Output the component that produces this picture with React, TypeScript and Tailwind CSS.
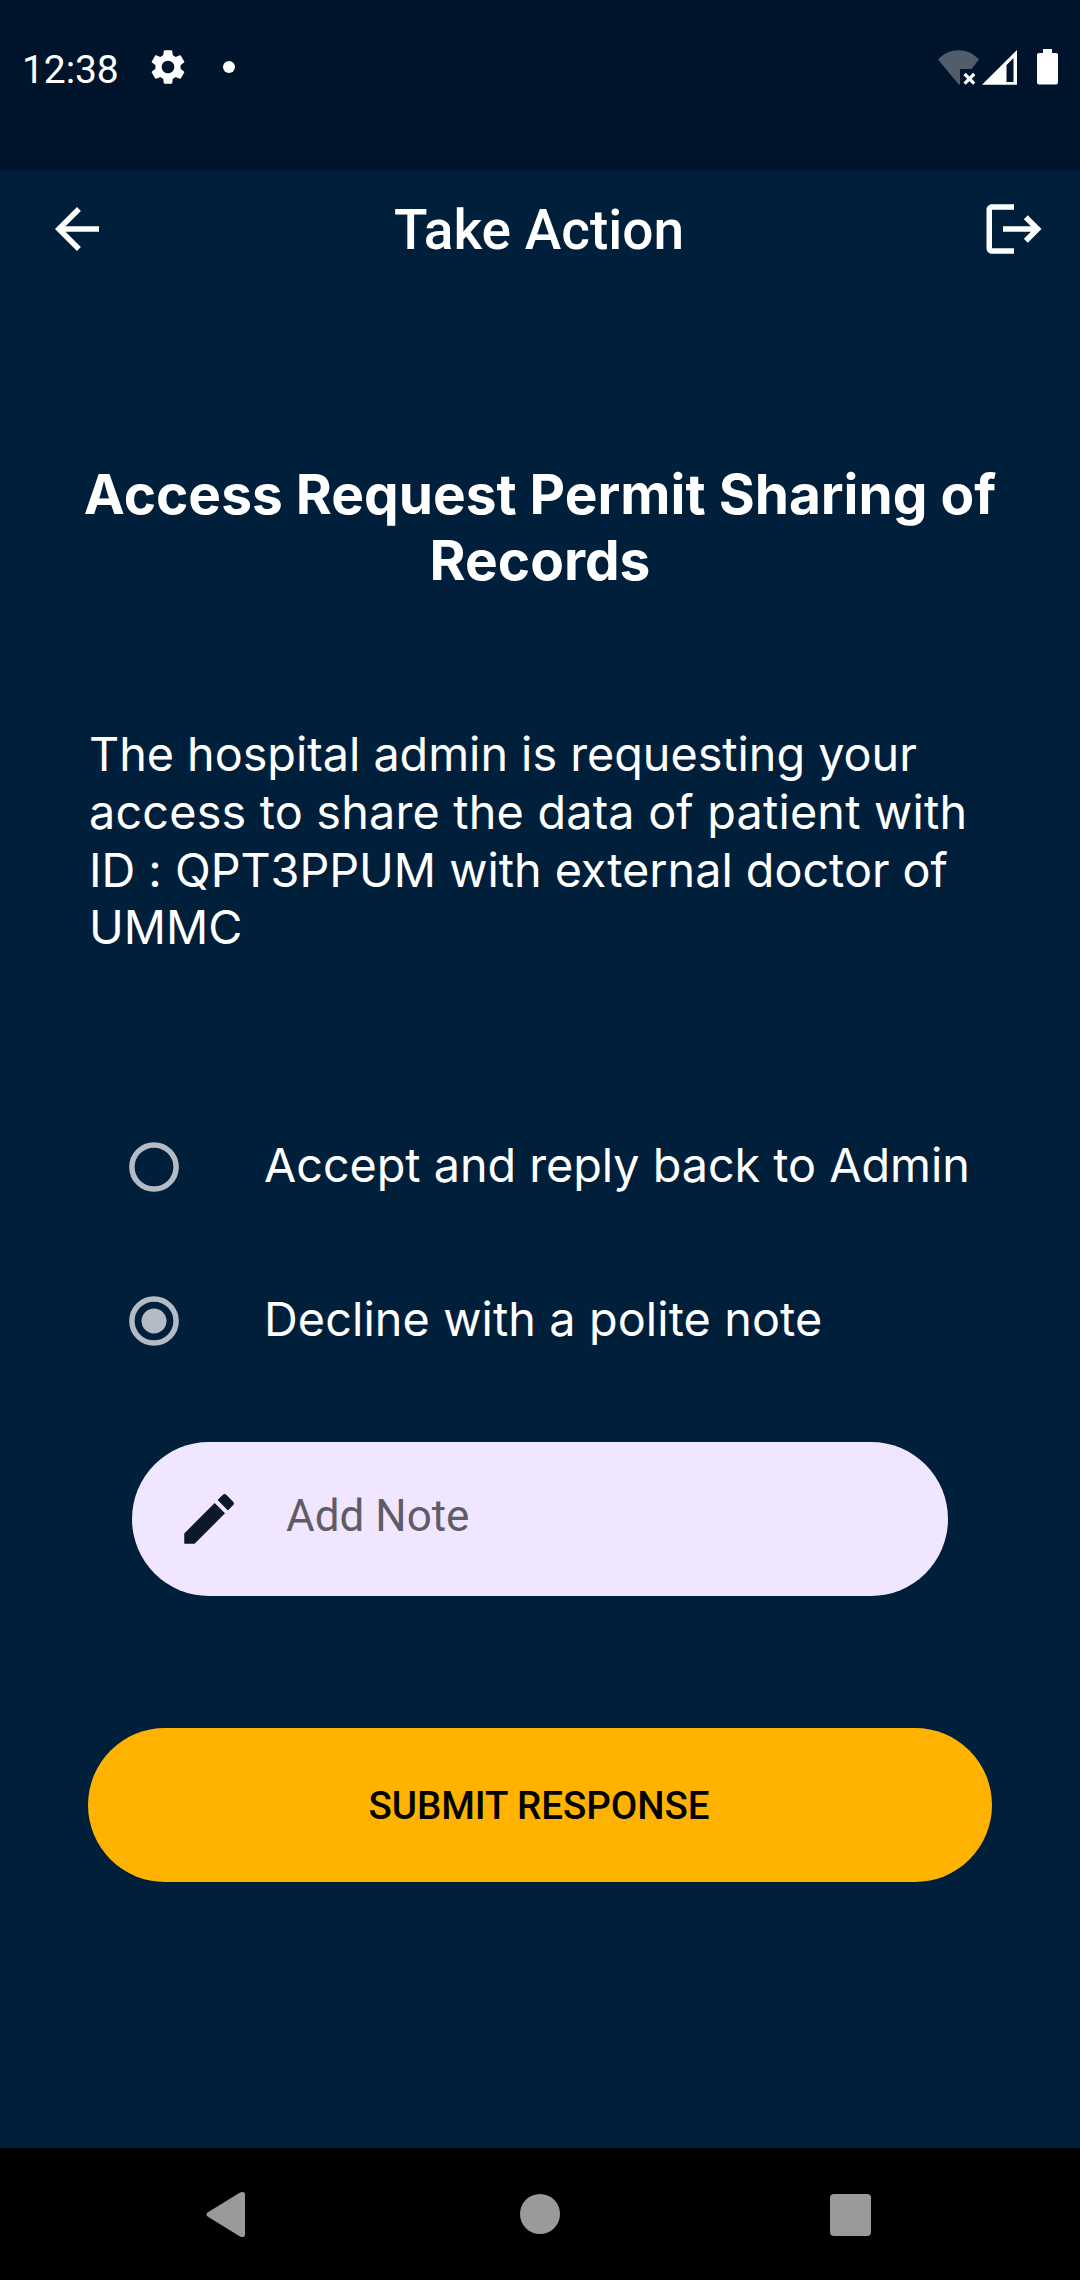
import { useState } from "react";
import { MdArrowBack, MdEdit, MdLogout, MdSettings } from "react-icons/md";

function StatusBar() {
  return (
    <div className="flex h-[171px] items-start justify-between bg-[#00142b] pt-[49px] pr-[22px] pl-[22px] text-white">
      <div className="flex h-9 items-center">
        <span className="mt-[6px] text-[39px] leading-none tracking-[-0.1px]">12:38</span>
        <MdSettings className="ml-[28px] size-[42px]" />
        <span className="ml-[34px] size-3 rounded-full bg-white" />
      </div>
      <div className="flex h-9 items-start">
        <svg className="h-9 w-[42px]" viewBox="0 0 42 36">
          <path d="M0 10.5C11.5 -1.8 29.5 -1.8 41 10.5L33.5 20H22V35.5H20.8Z" fill="#515d6c" />
          <path d="M26.6 25l9.6 9.6M36.2 25l-9.6 9.6" stroke="white" strokeWidth="3.2" />
        </svg>
        <svg className="ml-[2px] h-9 w-[36px]" viewBox="0 0 36 36">
          <path d="M0 35.8L35 1V35.8ZM24.5 16V33H31.5V9Z" fill="white" fillRule="evenodd" />
        </svg>
        <svg className="ml-[19px] h-9 w-[21px]" viewBox="0 0 21 36">
          <path
            d="M6 0H15V4H19Q21 4 21 6V33.5Q21 35.5 19 35.5H2Q0 35.5 0 33.5V6Q0 4 2 4H6Z"
            fill="white"
          />
        </svg>
      </div>
    </div>
  );
}

function AppBar() {
  return (
    <header className="flex h-[116px] items-center justify-between pr-[33px] pl-[44px] text-white">
      <button aria-label="Back">
        <MdArrowBack className="size-[66px]" />
      </button>
      <h1 className="mt-[2px] mr-[13px] text-[55px] leading-none font-medium">Take Action</h1>
      <button aria-label="Log out">
        <MdLogout className="size-[66px]" />
      </button>
    </header>
  );
}

type OptionProps = {
  label: string;
  tracking: string;
  checked: boolean;
  onSelect: () => void;
};

function Option({ label, tracking, checked, onSelect }: OptionProps) {
  return (
    <button
      role="radio"
      aria-checked={checked}
      onClick={onSelect}
      className="flex h-[154px] items-center pl-[129px] text-left"
    >
      <svg className="size-[50px]" viewBox="0 0 50 50" fill="none">
        <circle cx="25" cy="25" r="22.1" stroke="#b3bcc5" strokeWidth="5.5" />
        {checked && <circle cx="25" cy="25" r="12.5" fill="#b3bcc5" />}
      </svg>
      <span
        className={`-mt-[2px] ml-[85px] font-['Inter',sans-serif] text-[46.75px] leading-[57.75px] text-white ${tracking}`}
      >
        {label}
      </span>
    </button>
  );
}

function NavBar() {
  return (
    <nav className="flex h-[132px] items-start bg-black pt-[43px] pl-[206px]">
      <svg className="h-[48px] w-[39px]" viewBox="0 0 39 48">
        <path
          d="M2 21.2L34 1.6Q39 -0.6 39 4V43Q39 47.6 34 45.4L2 25.8Q-1.2 23.5 2 21.2Z"
          fill="#9a9a9a"
        />
      </svg>
      <span className="mt-[3px] ml-[275px] size-[40px] rounded-full bg-[#9a9a9a]" />
      <span className="mt-[3px] ml-[270px] h-[42px] w-[41px] rounded-[4px] bg-[#9a9a9a]" />
    </nav>
  );
}

export default function App() {
  const [choice, setChoice] = useState(1);
  return (
    <div className="flex h-[2280px] w-[1080px] flex-col bg-[#001f3b] font-['Roboto',sans-serif]">
      <StatusBar />
      <AppBar />
      <main className="flex flex-1 flex-col">
        <h2 className="mt-[174px] px-[66px] text-center font-['Inter',sans-serif] text-[55px] leading-[66px] font-bold text-white">
          Access Request Permit Sharing of Records
        </h2>
        <p className="mt-[133px] pr-[80px] pl-[89px] font-['Inter',sans-serif] text-[46.75px] leading-[57.75px] tracking-[-0.03px] text-white">
          The hospital admin is requesting your{" "}
          <span className="tracking-[0.19px]">access to share the data of patient with</span> ID :
          QPT3PPUM with external doctor of UMMC
        </p>
        <div role="radiogroup" className="mt-[133px] flex flex-col">
          <Option
            label="Accept and reply back to Admin"
            tracking="tracking-[-0.04px]"
            checked={choice === 0}
            onSelect={() => setChoice(0)}
          />
          <Option
            label="Decline with a polite note"
            tracking="tracking-[0.1px]"
            checked={choice === 1}
            onSelect={() => setChoice(1)}
          />
        </div>
        <div className="mx-[132px] mt-[44px] flex h-[154px] items-center rounded-full bg-[#f0e6ff] pl-[44px]">
          <MdEdit className="size-[66px] shrink-0 text-[#0b1929]" />
          <input
            placeholder="Add Note"
            className="-mt-[7px] ml-[44px] h-[60px] w-[560px] bg-transparent text-[44px] text-black outline-none placeholder:text-[#605c66]"
          />
        </div>
        <button className="mx-[88px] mt-[132px] h-[154px] rounded-full bg-[#ffb300] pt-[2px] pr-[2px] text-[38.5px] font-medium tracking-[-0.05px] text-black">
          SUBMIT RESPONSE
        </button>
      </main>
      <NavBar />
    </div>
  );
}
